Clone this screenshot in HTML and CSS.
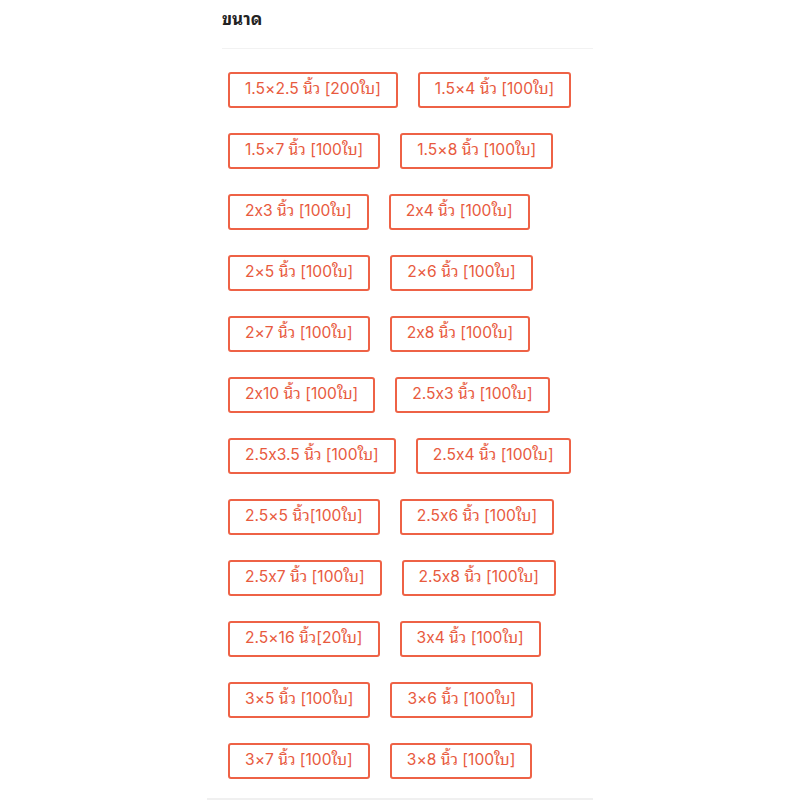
FILE: index.html
```html
<!doctype html>
<html lang="th">
<head>
    <meta charset="UTF-8">
    <meta name="viewport" content="width=device-width, initial-scale=1.0">
    <title>ขนาด</title>
    <link rel="stylesheet" href="styles.css">
</head>
<body>

<!-- Size picker -->
<div class="variation-panel">
    <div class="variation-header">
        <h3 class="variation-title">ขนาด</h3>
    </div>
    <div class="variation-list">
        <button class="variation-btn">1.5×2.5 นิ้ว [200ใบ]</button>
        <button class="variation-btn">1.5×4 นิ้ว [100ใบ]</button>
        <button class="variation-btn">1.5×7 นิ้ว [100ใบ]</button>
        <button class="variation-btn">1.5×8 นิ้ว [100ใบ]</button>
        <button class="variation-btn">2x3 นิ้ว [100ใบ]</button>
        <button class="variation-btn">2x4 นิ้ว [100ใบ]</button>
        <button class="variation-btn">2×5 นิ้ว [100ใบ]</button>
        <button class="variation-btn">2×6 นิ้ว [100ใบ]</button>
        <button class="variation-btn">2×7 นิ้ว [100ใบ]</button>
        <button class="variation-btn">2x8 นิ้ว [100ใบ]</button>
        <button class="variation-btn">2x10 นิ้ว [100ใบ]</button>
        <button class="variation-btn">2.5x3 นิ้ว [100ใบ]</button>
        <button class="variation-btn">2.5x3.5 นิ้ว [100ใบ]</button>
        <button class="variation-btn">2.5x4 นิ้ว [100ใบ]</button>
        <button class="variation-btn">2.5×5 นิ้ว[100ใบ]</button>
        <button class="variation-btn">2.5x6 นิ้ว [100ใบ]</button>
        <button class="variation-btn">2.5x7 นิ้ว [100ใบ]</button>
        <button class="variation-btn">2.5x8 นิ้ว [100ใบ]</button>
        <button class="variation-btn">2.5×16 นิ้ว[20ใบ]</button>
        <button class="variation-btn">3x4 นิ้ว [100ใบ]</button>
        <button class="variation-btn">3×5 นิ้ว [100ใบ]</button>
        <button class="variation-btn">3×6 นิ้ว [100ใบ]</button>
        <button class="variation-btn">3×7 นิ้ว [100ใบ]</button>
        <button class="variation-btn">3×8 นิ้ว [100ใบ]</button>
    </div>
</div>

</body>
</html>
```

FILE: styles.css
```css
body {
    margin: 0;
    background: #fff;
    font-family: Inter, "Noto Sans Thai Looped", "Noto Serif Thai", "Noto Sans Thai", sans-serif;
    font-feature-settings: "calt" 0;
}
.variation-panel {
    width: 386px;
    margin: 0 auto;
    border-bottom: 4px solid #f0f0f0;
}
.variation-header {
    margin-left: 15px;
    height: 48px;
    border-bottom: 1px solid #f2f2f2;
}
.variation-title {
    margin: 0;
    padding-top: 7px;
    font-size: 17px;
    line-height: 24px;
    font-weight: 700;
    color: #222;
}
.variation-list {
    display: flex;
    flex-wrap: wrap;
    gap: 25px 20px;
    padding: 23px 0 19px 21px;
}
.variation-btn {
    height: 36px;
    padding: 0 15px 2px;
    border: 2px solid #ee6246;
    border-radius: 3px;
    background: #fff;
    color: #e85a3e;
    font-family: inherit;
    font-feature-settings: inherit;
    font-size: 15.6px;
    line-height: 20px;
    cursor: pointer;
}
```
